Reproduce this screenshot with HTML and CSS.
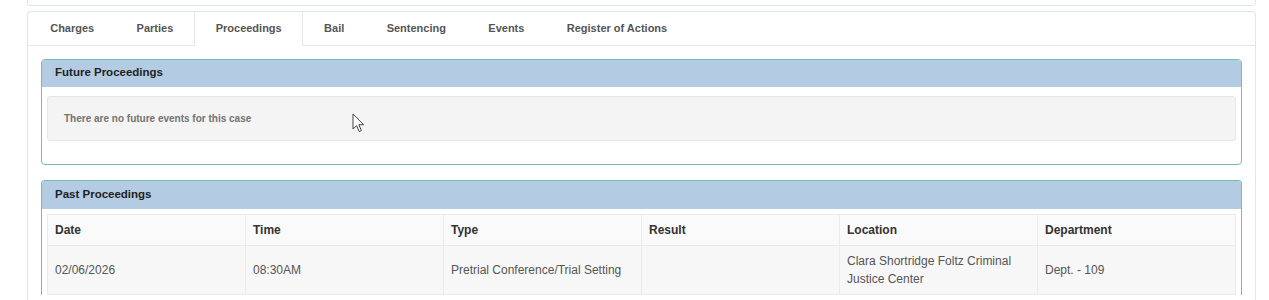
FILE: index.html
```html
<!DOCTYPE html>
<html lang="en">
<head>
<meta charset="utf-8">
<title>Proceedings</title>
<link rel="stylesheet" href="styles.css">
</head>
<body>
<div class="page">
  <div class="topcard"></div>
  <div class="card">
    <ul class="tabs">
      <li class="tab first">Charges</li>
      <li class="tab">Parties</li>
      <li class="tab active">Proceedings</li>
      <li class="tab">Bail</li>
      <li class="tab">Sentencing</li>
      <li class="tab">Events</li>
      <li class="tab">Register of Actions</li>
    </ul>
    <div class="card-body">
      <section class="panel">
        <div class="panel-head">Future Proceedings</div>
        <div class="panel-body future-body">
          <div class="well">There are no future events for this case</div>
        </div>
      </section>
      <section class="panel past">
        <div class="panel-head">Past Proceedings</div>
        <div class="panel-body past-body">
          <table class="grid">
            <thead>
              <tr><th>Date</th><th>Time</th><th>Type</th><th>Result</th><th>Location</th><th>Department</th></tr>
            </thead>
            <tbody>
              <tr><td>02/06/2026</td><td>08:30AM</td><td>Pretrial Conference/Trial Setting</td><td></td><td>Clara Shortridge Foltz Criminal Justice Center</td><td>Dept. - 109</td></tr>
            </tbody>
          </table>
        </div>
      </section>
    </div>
  </div>
  <svg class="cursor" width="14" height="22" viewBox="0 0 14 22"><path d="M1 1 L1 16 L4.6 12.6 L7.2 18.6 L9.4 17.6 L6.8 11.7 L11.6 11.7 Z" fill="#fff" stroke="#444" stroke-width="1" stroke-linejoin="round"/></svg>
</div>
</body>
</html>
```
FILE: styles.css
```css
* { box-sizing: border-box; }
html, body { margin: 0; padding: 0; background: #fff; }
body { font-family: "Liberation Sans", Arial, sans-serif; color: #555; }
.page { position: relative; padding: 0 13px 0 27px; height: 300px; overflow: hidden; }
.topcard {
  height: 6px;
  border: 1px solid #dfe5ec;
  border-top: none;
  border-radius: 0 0 4px 4px;
}
.card {
  margin-top: 5px;
  border: 1px solid #dfe5ec;
  border-radius: 4px;
  border-bottom: none;
  height: 300px;
}
.tabs {
  list-style: none;
  margin: 0;
  padding: 0 0 0 1px;
  display: flex;
  height: 34px;
  border-bottom: 1px solid #e6e6e6;
}
.tab {
  padding: 0 21.2px;
  font-size: 11px;
  font-weight: bold;
  color: #555;
  line-height: 32px;
  height: 34px;
}
.tab.active {
  background: #fff;
  border: 1px solid #e6e6e6;
  border-top: none;
  border-bottom: none;
  margin-bottom: -1px;
  padding: 0 20.2px;
}
.card-body { padding: 13px 13px 0; }
.panel {
  border: 1px solid #74bdb0;
  border-radius: 4px;
  overflow: hidden;
}
.panel.past { margin-top: 15px; border-bottom: none; border-radius: 4px 4px 0 0; }
.panel-head {
  height: 27px;
  background: #b3cbe3;
  color: #222;
  font-size: 11.5px;
  font-weight: bold;
  line-height: 25px;
  padding-left: 13px;
}
.panel.past .panel-head { height: 28px; line-height: 26px; }
.future-body { padding: 9px 5px 23px; }
.well {
  height: 45px;
  background: #f4f4f4;
  border: 1px solid #e6e6e6;
  border-radius: 3px;
  padding-left: 16px;
  font-size: 10px;
  font-weight: bold;
  color: #727272;
  line-height: 43px;
}
.past-body { padding: 5px 5px 0; }
.grid {
  width: 100%;
  border-collapse: collapse;
  table-layout: fixed;
  font-size: 12px;
}
.grid th, .grid td {
  border: 1px solid #ebebeb;
  text-align: left;
  vertical-align: middle;
  padding: 0 7px;
}
.grid th {
  height: 31px;
  font-weight: bold;
  color: #333;
  background: #fafafa;
}
.grid td {
  height: 48px;
  color: #555;
  line-height: 18px;
  background: #f7f7f7;
  padding-top: 6px;
  padding-bottom: 6px;
}
.cursor { position: absolute; left: 352px; top: 113px; }
```
